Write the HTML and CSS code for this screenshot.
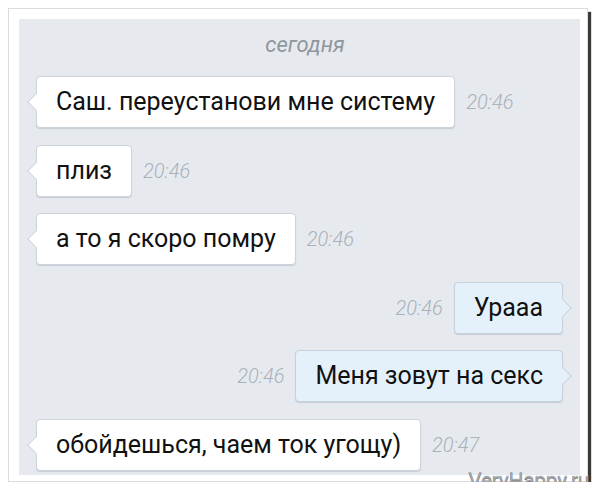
FILE: index.html
```html
<!DOCTYPE html>
<html>

<head>
    <meta charset="utf-8">
    <title>Чат</title>
    <link rel="stylesheet" href="styles.css">
</head>

<body>
    <div class="frame">
        <div class="chat">
            <div class="day">сегодня</div>
            <div class="row in">
                <div class="bubble">Саш. переустанови мне систему</div>
                <span class="time">20:46</span>
            </div>
            <div class="row in">
                <div class="bubble">плиз</div>
                <span class="time">20:46</span>
            </div>
            <div class="row in">
                <div class="bubble">а то я скоро помру</div>
                <span class="time">20:46</span>
            </div>
            <div class="row out">
                <span class="time">20:46</span>
                <div class="bubble">Урааа</div>
            </div>
            <div class="row out">
                <span class="time">20:46</span>
                <div class="bubble">Меня зовут на секс</div>
            </div>
            <div class="row in">
                <div class="bubble">обойдешься, чаем ток угощу)</div>
                <span class="time">20:47</span>
            </div>
        </div>
        <div class="mark">VeryHappy.ru</div>
    </div>
</body>
</html>
```

FILE: styles.css
```css
html {
    background: #fff;
}

body {
    margin: 0;
    padding: 8px 0 0 8px;
    font-family: Roboto, "Noto Sans", sans-serif;
}

.frame {
    position: relative;
    box-sizing: border-box;
    width: 580px;
    padding: 10px 7px 6px 10px;
    background: #fff;
    border: 1px solid #dcdcdc;
    box-shadow: 3px 4px 1px #3a3a3a;
}

.chat {
    display: flex;
    flex-direction: column;
    gap: 16.5px;
    height: 456px;
    box-sizing: border-box;
    padding: 14px 6px 4px 17px;
    background: #e6eaef;
}

.day {
    height: 24px;
    line-height: 24px;
    margin-bottom: 2.5px;
    text-align: center;
    font-size: 22px;
    font-style: italic;
    color: #90969d;
}

.row {
    display: flex;
    align-items: center;
    gap: 11px;
    height: 52px;
}

.row.out {
    justify-content: flex-end;
}

.bubble {
    position: relative;
    height: 52px;
    box-sizing: border-box;
    padding: 0 19px;
    line-height: 50px;
    font-size: 25px;
    color: #111;
    background: #fff;
    border: 1px solid #cdd3da;
    border-radius: 4px;
    box-shadow: 0 1px 1px #c7ced6;
}

.bubble::before {
    content: "";
    position: absolute;
    top: 18px;
    width: 12px;
    height: 12px;
    background: inherit;
    border: 1px solid #cdd3da;
    transform: rotate(45deg);
}

.in .bubble::before {
    left: -7px;
    border-top-color: transparent;
    border-right-color: transparent;
}

.out .bubble {
    background: #e4f1fb;
    border-color: #c5d1dc;
    margin-right: 11px;
}

.out .bubble::before {
    right: -7px;
    border-bottom-color: transparent;
    border-left-color: transparent;
}

.time {
    font-size: 20px;
    font-style: italic;
    font-weight: 300;
    color: #a9b1ba;
}

.mark {
    position: absolute;
    right: -2px;
    bottom: -10px;
    line-height: 1;
    font-size: 21px;
    letter-spacing: -0.3px;
    color: #a3a6aa;
    text-shadow: 0 1px 0 #6b6e72, 0 -1px 0 #eee;
}
```
